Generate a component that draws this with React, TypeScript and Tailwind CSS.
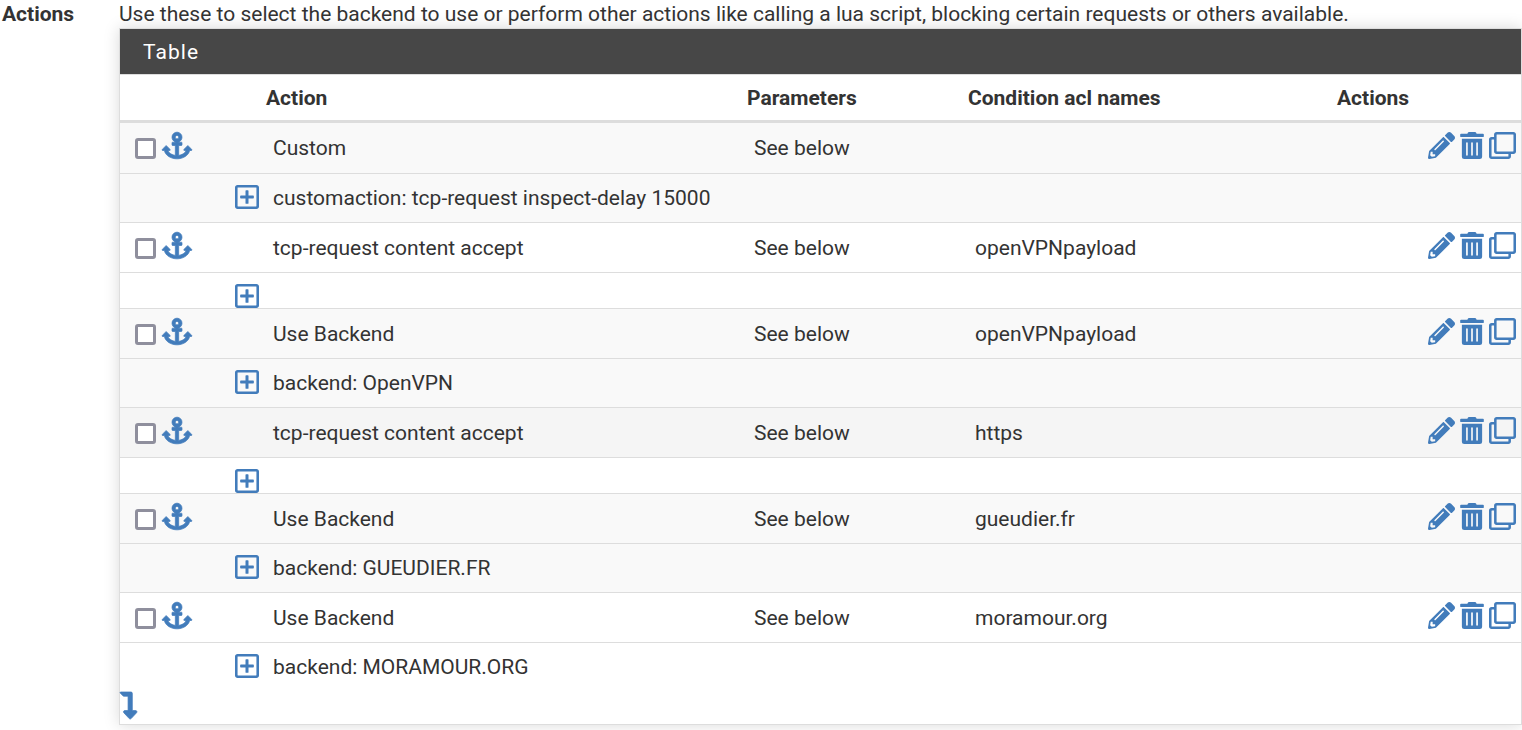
import { FaAnchor, FaLevelDownAlt, FaPencilAlt, FaRegClone, FaRegPlusSquare, FaTrashAlt } from "react-icons/fa";

interface ActionRow {
  id: number;
  action: string;
  acl?: string;
  detail?: string;
  rowColor: string;
  detailColor: string;
}

const rows: ActionRow[] = [
  {
    id: 1,
    action: "Custom",
    detail: "customaction: tcp-request inspect-delay 15000",
    rowColor: "bg-[#f9f9f9]",
    detailColor: "bg-[#f9f9f9]",
  },
  { id: 2, action: "tcp-request content accept", acl: "openVPNpayload", rowColor: "bg-white", detailColor: "bg-white" },
  {
    id: 3,
    action: "Use Backend",
    acl: "openVPNpayload",
    detail: "backend: OpenVPN",
    rowColor: "bg-[#f9f9f9]",
    detailColor: "bg-[#f9f9f9]",
  },
  { id: 4, action: "tcp-request content accept", acl: "https", rowColor: "bg-[#f5f5f5]", detailColor: "bg-white" },
  {
    id: 5,
    action: "Use Backend",
    acl: "gueudier.fr",
    detail: "backend: GUEUDIER.FR",
    rowColor: "bg-[#f9f9f9]",
    detailColor: "bg-[#f9f9f9]",
  },
  {
    id: 6,
    action: "Use Backend",
    acl: "moramour.org",
    detail: "backend: MORAMOUR.ORG",
    rowColor: "bg-white",
    detailColor: "bg-white",
  },
];

function ActionRows({ row }: { row: ActionRow }) {
  return (
    <>
      <tr className={`h-[50px] first:[&>td]:border-t-0 [&>td]:border-t [&>td]:border-[#dddddd] ${row.rowColor}`}>
        <td colSpan={2} className="pt-[9px] pl-[15px] align-top">
          <div className="flex items-center gap-[6px]">
            <input
              type="checkbox"
              aria-label={`Select rule ${row.id}`}
              className="mt-[6px] size-[21px] appearance-none rounded-[3px] border-3 border-[#8f8f9d] bg-white checked:bg-[#337ab7]"
            />
            <button type="button" title="Move checked entries here" className="text-[#427cbb]">
              <FaAnchor strokeWidth={14} className="h-[27px] w-[30px] overflow-visible" />
            </button>
          </div>
        </td>
        <td className="pl-[15px]">{row.action}</td>
        <td className="pl-[15px]">See below</td>
        <td className="pl-[15px]">{row.acl}</td>
        <td className="pt-[9px] pr-[5px] align-top">
          <div className="flex items-center justify-end gap-[5px] text-[#427cbb]">
            <button type="button" title="Edit entry">
              <FaPencilAlt className="size-[27px]" />
            </button>
            <button type="button" title="Delete entry">
              <FaTrashAlt className="h-[27px] w-6" />
            </button>
            <button type="button" title="Duplicate entry">
              <FaRegClone className="size-[27px]" />
            </button>
          </div>
        </td>
      </tr>
      <tr className={`[&>td]:border-t [&>td]:border-[#dddddd] ${row.detail ? "h-[49px]" : "h-[36px]"} ${row.detailColor}`}>
        <td />
        <td className="pt-[11px] pl-2 align-top">
          <button type="button" title="Show details" className="block text-[#427cbb]">
            <FaRegPlusSquare viewBox="0 32 448 448" className="size-6" />
          </button>
        </td>
        <td colSpan={4} className="pl-[15px]">
          {row.detail}
        </td>
      </tr>
    </>
  );
}

export default function App() {
  return (
    <main className="flex bg-white pb-[6px] font-['Roboto',sans-serif] text-[21px] leading-7 text-[#333333]">
      <div className="w-[119px] shrink-0 pl-[2px] font-bold">Actions</div>
      <div className="min-w-0 grow">
        <p>Use these to select the backend to use or perform other actions like calling a lua script, blocking certain requests or others available.</p>
        <section className="border border-[#dddddd] bg-white shadow-[0_0_15px_rgba(0,0,0,0.15)]">
          <h2 className="h-[45px] bg-[#474747] pt-px pl-[23px] leading-[44px] tracking-wider text-white">Table</h2>
          <table className="w-full table-fixed border-separate border-spacing-0 border-t border-[#dddddd] text-left">
            <colgroup>
              <col className="w-[107px]" />
              <col className="w-[31px]" />
              <col />
              <col className="w-[221px]" />
              <col className="w-[369px]" />
              <col className="w-[192px]" />
            </colgroup>
            <thead>
              <tr className="h-[48px] *:border-b-3 *:border-[#dddddd]">
                <td />
                <td />
                <th className="pl-2">Action</th>
                <th className="pl-2">Parameters</th>
                <th className="pl-2">Condition acl names</th>
                <th className="pl-2">Actions</th>
              </tr>
            </thead>
            <tbody>
              {rows.map((row) => (
                <ActionRows key={row.id} row={row} />
              ))}
            </tbody>
          </table>
          <button type="button" title="Add entry at the end of the list" className="block pt-px pb-[5px] text-[#427cbb]">
            <FaLevelDownAlt strokeWidth={14} className="h-[27px] w-[17px] overflow-visible" />
          </button>
        </section>
      </div>
    </main>
  );
}
